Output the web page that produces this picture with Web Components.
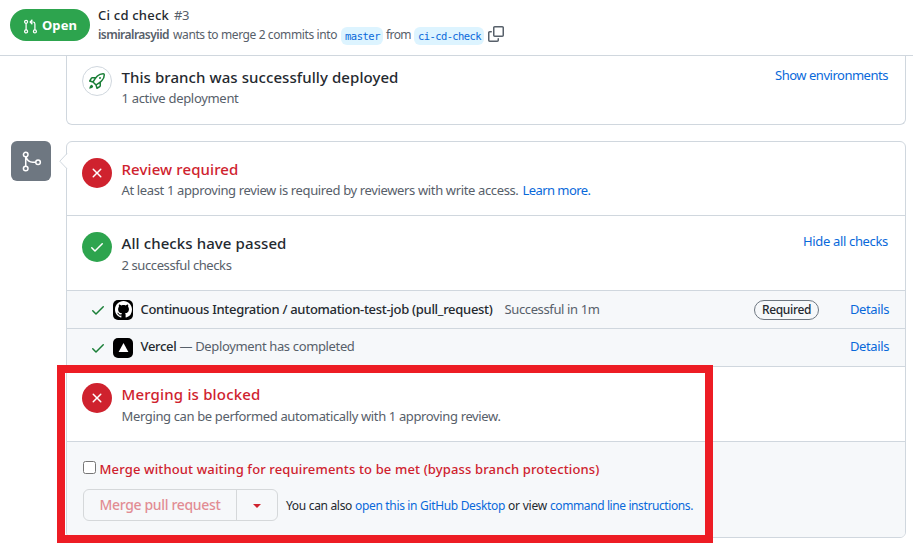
<!DOCTYPE html>
<html lang="en">
<head>
<meta charset="utf-8">
<title>Ci cd check #3</title>
<style>
html,body{margin:0;height:543px;overflow:hidden;background:#fff}
body{font:13px/20px "Noto Sans","Open Sans",sans-serif;color:#24292f;position:relative}
a{color:#0969da;text-decoration:none}
b{font-weight:500}
.muted{color:#57606a}
.danger{color:#cf222e}
main{display:grid;grid-template-columns:40px 840px;column-gap:15px;row-gap:16px;padding-left:11px}
main>pr-card{grid-column:2}
</style>
</head>
<body>
<pr-header></pr-header>
<main>
  <pr-card joined>
    <status-row kind="rocket" style="--h:68px;--pad:10px;--sub:1px">
      <fit-text slot="title" w="277">This branch was successfully deployed</fit-text>
      <fit-text slot="sub" w="117">1 active deployment</fit-text>
      <a slot="action"><fit-text w="113">Show environments</fit-text></a>
    </status-row>
  </pr-card>
  <merge-badge></merge-badge>
  <pr-card caret>
    <status-row kind="fail" style="--h:73px;--pad:16px;--sub:1px">
      <fit-text slot="title" w="117" class="danger">Review required</fit-text>
      <fit-text slot="sub" w="397">At least 1 approving review is required by reviewers with write access.</fit-text>
      <a slot="sub"><fit-text w="68">Learn more.</fit-text></a>
    </status-row>
    <status-row kind="pass" line style="--h:74px;--pad:16px;--sub:2px">
      <fit-text slot="title" w="165">All checks have passed</fit-text>
      <fit-text slot="sub" w="110">2 successful checks</fit-text>
      <a slot="action"><fit-text w="85">Hide all checks</fit-text></a>
    </status-row>
    <check-row icon="github" style="--up:1px">
      <b><fit-text w="352">Continuous Integration / automation-test-job (pull_request)</fit-text></b>
      <fit-text w="95" class="muted" style="margin-left:12px">Successful in 1m</fit-text>
      <state-label slot="end"></state-label>
    </check-row>
    <check-row icon="vercel" style="--up:2px">
      <b><fit-text w="36">Vercel</fit-text></b>
      <fit-text w="175" class="muted" style="margin-left:3px">— Deployment has completed</fit-text>
    </check-row>
    <status-row kind="fail" line style="--h:74px;--pad:16px;--sub:2px">
      <fit-text slot="title" w="139" class="danger">Merging is blocked</fit-text>
      <fit-text slot="sub" w="379">Merging can be performed automatically with 1 approving review.</fit-text>
    </status-row>
    <merge-form></merge-form>
  </pr-card>
</main>
<red-frame></red-frame>

<script>
const PATHS={
 pr:'<g fill="none" stroke="currentColor" stroke-width="1.3"><circle cx="3.3" cy="3" r="1.6"/><circle cx="3.3" cy="13.3" r="1.6"/><circle cx="12.7" cy="13.3" r="1.6"/><path d="M3.3 4.6v7.1M12.7 11.7V5.2a2 2 0 00-2-2H8M10 .8L7.6 3.2 10 5.6"/></g>',
 merge:'<g fill="none" stroke="currentColor" stroke-width="1.15"><circle cx="3.6" cy="2.7" r="1.75"/><circle cx="3.6" cy="13.3" r="1.75"/><circle cx="13" cy="8.6" r="1.75"/><path d="M3.6 4.4v7.1M3.9 4.5C4.6 7 6.4 8.6 9 8.6h2.3"/></g>',
 copy:'<path d="M0 6.75C0 5.784.784 5 1.75 5h1.5a.75.75 0 010 1.5h-1.5a.25.25 0 00-.25.25v7.5c0 .138.112.25.25.25h7.5a.25.25 0 00.25-.25v-1.5a.75.75 0 011.5 0v1.5A1.75 1.75 0 019.25 16h-7.5A1.75 1.75 0 010 14.25v-7.5z"/><path d="M5 1.75C5 .784 5.784 0 6.75 0h7.5C15.216 0 16 .784 16 1.75v7.5A1.75 1.75 0 0114.25 11h-7.5A1.75 1.75 0 015 9.25v-7.5zm1.75-.25a.25.25 0 00-.25.25v7.5c0 .138.112.25.25.25h7.5a.25.25 0 00.25-.25v-7.5a.25.25 0 00-.25-.25h-7.5z"/>',
 check:'<path d="M13.78 4.22a.75.75 0 010 1.06l-7.25 7.25a.75.75 0 01-1.06 0L2.22 9.28a.75.75 0 011.06-1.06L6 10.94l6.72-6.72a.75.75 0 011.06 0z"/>',
 x:'<path d="M3.72 3.72a.75.75 0 011.06 0L8 6.94l3.22-3.22a.75.75 0 111.06 1.06L9.06 8l3.22 3.22a.75.75 0 11-1.06 1.06L8 9.06l-3.22 3.22a.75.75 0 01-1.06-1.06L6.94 8 3.72 4.78a.75.75 0 010-1.06z"/>',
 rocket:'<path fill-rule="evenodd" d="M14.064 0a8.75 8.75 0 00-6.187 2.563l-.459.458c-.314.314-.616.641-.904.979H3.31a1.75 1.75 0 00-1.49.833L.11 7.607a.75.75 0 00.418 1.11l3.102.954c.037.051.079.1.124.145l2.429 2.428c.046.046.094.088.145.125l.954 3.102a.75.75 0 001.11.418l2.774-1.707a1.75 1.75 0 00.833-1.49V9.485c.338-.288.665-.59.979-.904l.458-.459A8.75 8.75 0 0016 1.936V1.75A1.75 1.75 0 0014.25 0h-.186zM10.5 10.625c-.088.06-.177.118-.266.175l-2.35 1.521.548 1.783 1.949-1.2a.25.25 0 00.119-.213v-2.066zM3.678 8.116L5.2 5.766c.058-.09.117-.178.176-.266H3.309a.25.25 0 00-.213.119l-1.2 1.95 1.782.547zm5.26-4.493A7.25 7.25 0 0114.063 1.5h.186a.25.25 0 01.25.25v.186a7.25 7.25 0 01-2.123 5.127l-.459.458a15.21 15.21 0 01-2.499 2.02l-2.317 1.5-2.143-2.143 1.5-2.317a15.25 15.25 0 012.02-2.5l.458-.458zM12 5a1 1 0 11-2 0 1 1 0 012 0zm-8.44 9.56a1.5 1.5 0 10-2.12-2.12c-.734.73-1.047 2.332-1.15 3.003a.23.23 0 00.265.265c.671-.103 2.273-.416 3.005-1.148z"/>',
 github:'<path d="M8 0C3.58 0 0 3.58 0 8c0 3.54 2.29 6.53 5.47 7.59.4.07.55-.17.55-.38 0-.19-.01-.82-.01-1.49-2.01.37-2.53-.49-2.69-.94-.09-.23-.48-.94-.82-1.13-.28-.15-.68-.52-.01-.53.63-.01 1.08.58 1.23.82.72 1.21 1.87.87 2.33.66.07-.52.28-.87.51-1.07-1.78-.2-3.64-.89-3.64-3.95 0-.87.31-1.59.82-2.15-.08-.2-.36-1.02.08-2.12 0 0 .67-.21 2.2.82.64-.18 1.32-.27 2-.27s1.36.09 2 .27c1.53-1.04 2.2-.82 2.2-.82.44 1.1.16 1.92.08 2.12.51.56.82 1.27.82 2.15 0 3.07-1.87 3.75-3.65 3.95.29.25.54.73.54 1.48 0 1.07-.01 1.93-.01 2.2 0 .21.15.46.55.38A8.01 8.01 0 0016 8c0-4.42-3.58-8-8-8z"/>',
 vercel:'<path d="M8 2.6L14 13.6H2z"/>'
};
const icon=(n,s)=>`<svg width="${s}" height="${s}" viewBox="0 0 16 16" fill="currentColor" aria-hidden="true">${PATHS[n]}</svg>`;
const BASE='<style>*{box-sizing:border-box}svg{display:block;flex:none}a{color:#0969da}</style>';
function define(name,render){
  customElements.define(name,class extends HTMLElement{
    constructor(){super();this.attachShadow({mode:'open'});}
    connectedCallback(){this.shadowRoot.innerHTML=BASE+render(this);}
  });
}

define('pr-header',()=>`<style>
:host{display:flex;box-sizing:border-box;height:56px;border-bottom:1px solid #d0d7de;padding:0 10px;gap:8px;background:#fff}
.open{display:flex;align-items:center;gap:4px;width:80px;height:32px;margin-top:9px;padding-left:13px;border-radius:16px;background:#2da44e;color:#fff;font-weight:700}
.open svg{margin-top:2px}
.t{display:flex;flex-direction:column;padding-top:5px}
.r{display:flex;align-items:center;height:20px;white-space:nowrap}
.one{font-weight:500;gap:5px}.one .n{font-weight:400;color:#57606a}
.two{font-size:12px;color:#57606a;gap:4px}
.two b{font-weight:600}
code{display:flex;align-items:center;height:18px;margin-top:2px;padding:0 4px;border-radius:6px;background:#ddf4ff;color:#0969da;font:10.5px/18px "DejaVu Sans Mono",monospace}
code fit-text{margin:0 -1px 1px 0}
.two svg{margin:-2px 0 0 0}
</style>
<div class="open">${icon('pr',15)}<fit-text w="35">Open</fit-text></div>
<div class="t"><div class="r one"><fit-text w="71">Ci cd check</fit-text><fit-text class="n" w="15">#3</fit-text></div>
<div class="r two"><b><fit-text w="71">ismiralrasyiid</fit-text></b><fit-text w="164">wants to merge 2 commits into</fit-text><code><fit-text w="35">master</fit-text></code><fit-text w="25" style="margin:0 -1px 0 -1px">from</fit-text><code><fit-text w="63">ci-cd-check</fit-text></code>${icon('copy',16)}</div></div>`);

define('merge-badge',()=>`<style>:host{display:flex;width:40px;height:40px;border-radius:6px;background:#6e7781;color:#fff;align-items:center;justify-content:center}</style>${icon('merge',21)}`);

define('pr-card',el=>`<style>
:host{display:block;box-sizing:border-box;position:relative;border:1px solid #d0d7de;border-radius:6px;background:#fff}
:host([joined]){border-top:0;border-radius:0 0 6px 6px}
.caret{position:absolute;left:-8px;top:11px}
</style>${el.hasAttribute('caret')?'<svg class="caret" width="9" height="17"><path d="M8.5 .5L.8 8.2l7.7 7.8z" fill="#fff"/><path d="M8 .5L.8 8.2 8 15.8" fill="none" stroke="#d0d7de"/></svg>':''}<slot></slot>`);

define('status-row',el=>{
 const k=el.getAttribute('kind'),n={fail:'x',pass:'check',rocket:'rocket'}[k];
 return `<style>
:host{display:flex;height:var(--h);padding:0 17px 0 15px;gap:9.5px;padding-top:var(--pad);box-sizing:border-box}
:host([line]){border-top:1px solid #d0d7de;height:calc(var(--h) + 1px)}
.c{width:30px;height:30px;border-radius:50%;display:flex;align-items:center;justify-content:center;flex:none;color:#fff}
.fail{background:#cf222e}.pass{background:#2da44e}.rocket{border:1px solid #d0d7de;color:#1a7f37}
.b{flex:1}.t{font-size:15px;font-weight:500;line-height:24px;height:22px;margin-top:-1px}
.s{display:flex;gap:4px;line-height:20px;margin-top:var(--sub);color:#57606a}
.a{line-height:20px;margin-top:-1px}
</style><div class="c ${k}">${icon(n,16)}</div><div class="b"><div class="t"><slot name="title"></slot></div><div class="s"><slot name="sub"></slot></div></div><div class="a"><slot name="action"></slot></div>`;});

define('check-row',el=>`<style>
:host{display:flex;height:38px;box-sizing:border-box;border-top:1px solid #d0d7de;background:#f6f8fa;padding:0 16px 0 23px;align-items:center}
.ok{color:#1a7f37;margin-right:7px}
.av{width:20px;height:20px;border-radius:5px;background:#000;color:#fff;display:flex;align-items:center;justify-content:center;margin-right:7.5px}
.m{flex:1;display:flex;line-height:20px}.e{margin-right:31px}
.m,a{padding-bottom:calc(2*var(--up))}
</style><span class="ok">${icon('check',16)}</span><span class="av">${icon(el.getAttribute('icon'),el.getAttribute('icon')==='github'?17:13)}</span><div class="m"><slot></slot></div><div class="e"><slot name="end"></slot></div><a><fit-text w="39">Details</fit-text></a>`);

define('state-label',()=>`<style>:host{display:flex;box-sizing:border-box;width:65px;height:20px;border:1px solid #6e7781;border-radius:10px;align-items:center;justify-content:center;font-size:12px;font-weight:500;color:#24292f}</style><fit-text w="49">Required</fit-text>`);

define('merge-form',()=>`<style>
:host{display:block;box-sizing:border-box;height:96px;border-top:1px solid #d0d7de;border-radius:0 0 5px 5px;background:#f6f8fa;padding:17px 16px 0}
.l{display:flex;align-items:center;gap:3.5px;height:20px;color:#cf222e;font-weight:500}
input{width:13px;height:13px;margin:0 0 3px}
.r{display:flex;align-items:center;height:32px;margin-top:10px;gap:8px;white-space:nowrap}
.g{display:flex;width:195px;height:32px;border:1px solid #d5d8da;border-radius:6px;color:#cf222e}
.m{width:153px;border-right:1px solid #d5d8da;display:flex;align-items:center;justify-content:center;font-size:14px;font-weight:500}
.m fit-text{opacity:.5}
.d{flex:1;display:flex;align-items:center;justify-content:center}
.d i{border:4px solid transparent;border-top-color:#cf222e;border-bottom:0;margin-top:1px}
.n{display:flex;gap:3px;font-size:12px;padding-top:2px}
</style><div class="l"><input type="checkbox" aria-label="Bypass branch protections"><fit-text w="500">Merge without waiting for requirements to be met (bypass branch protections)</fit-text></div>
<div class="r"><div class="g"><div class="m"><fit-text w="121">Merge pull request</fit-text></div><div class="d"><i></i></div></div>
<div class="n"><fit-text w="66">You can also</fit-text><a><fit-text w="150">open this in GitHub Desktop</fit-text></a><fit-text w="39">or view</fit-text><a><fit-text w="143">command line instructions.</fit-text></a></div></div>`);

define('red-frame',()=>`<style>:host{position:absolute;left:57px;top:365px;width:656px;height:178px;box-sizing:border-box;border:8px solid #ed1c24;pointer-events:none}</style>`);

/* A one-line text whose tracking is tuned so that it spans the given width. */
customElements.define('fit-text',class extends HTMLElement{
  constructor(){super();this.attachShadow({mode:'open'}).innerHTML='<style>:host{display:inline-block;white-space:nowrap}</style><slot></slot>';}
  connectedCallback(){
    const w=+this.getAttribute('w'),n=this.textContent.length;
    const now=this.getBoundingClientRect().width;
    this.style.letterSpacing=((w-now)/n)+'px';
    this.style.width=w+'px';
  }
});
</script>
</body>
</html>
